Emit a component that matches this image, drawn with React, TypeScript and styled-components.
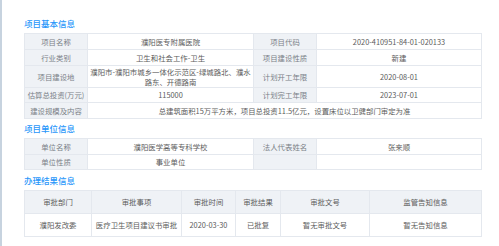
import React from 'react';
import styled, { createGlobalStyle } from 'styled-components';

const Global = createGlobalStyle`
  html, body {
    margin: 0;
    padding: 0;
    background: #ffffff;
  }
`;

const Page = styled.div`
  width: 499px;
  height: 246px;
  box-sizing: border-box;
  padding: 14px 20px 0 22px;
  border-left: 2px solid #c7d3df;
  font-family: "Noto Sans CJK SC", "Noto Sans", sans-serif;
  overflow: hidden;
`;

const Title = styled.h3<{ $h: number }>`
  margin: 0;
  height: ${(p) => p.$h}px;
  line-height: ${(p) => p.$h}px;
  font-size: 8.5px;
  font-weight: 500;
  color: rgb(40, 150, 250);
`;

const Table = styled.table`
  width: 457px;
  border-collapse: collapse;
  table-layout: fixed;
  font-size: 7.4px;
`;

const Row = styled.tr<{ $h: number }>`
  height: ${(p) => p.$h}px;
`;

const Cell = styled.td<{ $label?: boolean; $head?: boolean }>`
  border: 1px solid #e4e8ee;
  background: ${(p) => (p.$label || p.$head ? '#eff2f6' : '#ffffff')};
  color: ${(p) => (p.$label ? '#7a7f86' : '#5c5c5c')};
  text-align: center;
  vertical-align: middle;
  padding: 0 2px;
  line-height: 9.5px;
  white-space: normal;
`;

const basicCols = [63, 166, 63, 165];
const resultCols = [67, 90, 54, 45, 89, 112];

const Cols = ({ widths }: { widths: number[] }) => (
  <colgroup>
    {widths.map((w, i) => (
      <col key={i} style={{ width: w }} />
    ))}
  </colgroup>
);

const App = () => {
  return (
    <Page>
      <Global />
      <Title $h={19}>项目基本信息</Title>
      <Table>
        <Cols widths={basicCols} />
        <tbody>
          <Row $h={16}>
            <Cell $label>项目名称</Cell>
            <Cell>濮阳医专附属医院</Cell>
            <Cell $label>项目代码</Cell>
            <Cell>2020-410951-84-01-020133</Cell>
          </Row>
          <Row $h={16}>
            <Cell $label>行业类别</Cell>
            <Cell>卫生和社会工作-卫生</Cell>
            <Cell $label>项目建设性质</Cell>
            <Cell>新建</Cell>
          </Row>
          <Row $h={22}>
            <Cell $label>项目建设地</Cell>
            <Cell>濮阳市-濮阳市城乡一体化示范区-绿城路北、濮水路东、开德路南</Cell>
            <Cell $label>计划开工年限</Cell>
            <Cell>2020-08-01</Cell>
          </Row>
          <Row $h={15}>
            <Cell $label>估算总投资(万元)</Cell>
            <Cell>115000</Cell>
            <Cell $label>计划完工年限</Cell>
            <Cell>2023-07-01</Cell>
          </Row>
          <Row $h={16}>
            <Cell $label>建设规模及内容</Cell>
            <Cell colSpan={3}>总建筑面积15万平方米，项目总投资11.5亿元，设置床位以卫健部门审定为准</Cell>
          </Row>
        </tbody>
      </Table>

      <Title $h={19}>项目单位信息</Title>
      <Table>
        <Cols widths={basicCols} />
        <tbody>
          <Row $h={16}>
            <Cell $label>单位名称</Cell>
            <Cell>濮阳医学高等专科学校</Cell>
            <Cell $label>法人代表姓名</Cell>
            <Cell>张来顺</Cell>
          </Row>
          <Row $h={15}>
            <Cell $label>单位性质</Cell>
            <Cell>事业单位</Cell>
            <Cell $label></Cell>
            <Cell></Cell>
          </Row>
        </tbody>
      </Table>

      <Title $h={20}>办理结果信息</Title>
      <Table>
        <Cols widths={resultCols} />
        <tbody>
          <Row $h={23}>
            <Cell $head>审批部门</Cell>
            <Cell $head>审批事项</Cell>
            <Cell $head>审批时间</Cell>
            <Cell $head>审批结果</Cell>
            <Cell $head>审批文号</Cell>
            <Cell $head>监管告知信息</Cell>
          </Row>
          <Row $h={23}>
            <Cell>濮阳发改委</Cell>
            <Cell>医疗卫生项目建议书审批</Cell>
            <Cell>2020-03-30</Cell>
            <Cell>已批复</Cell>
            <Cell>暂无审批文号</Cell>
            <Cell>暂无告知信息</Cell>
          </Row>
        </tbody>
      </Table>
    </Page>
  );
};

export default App;
